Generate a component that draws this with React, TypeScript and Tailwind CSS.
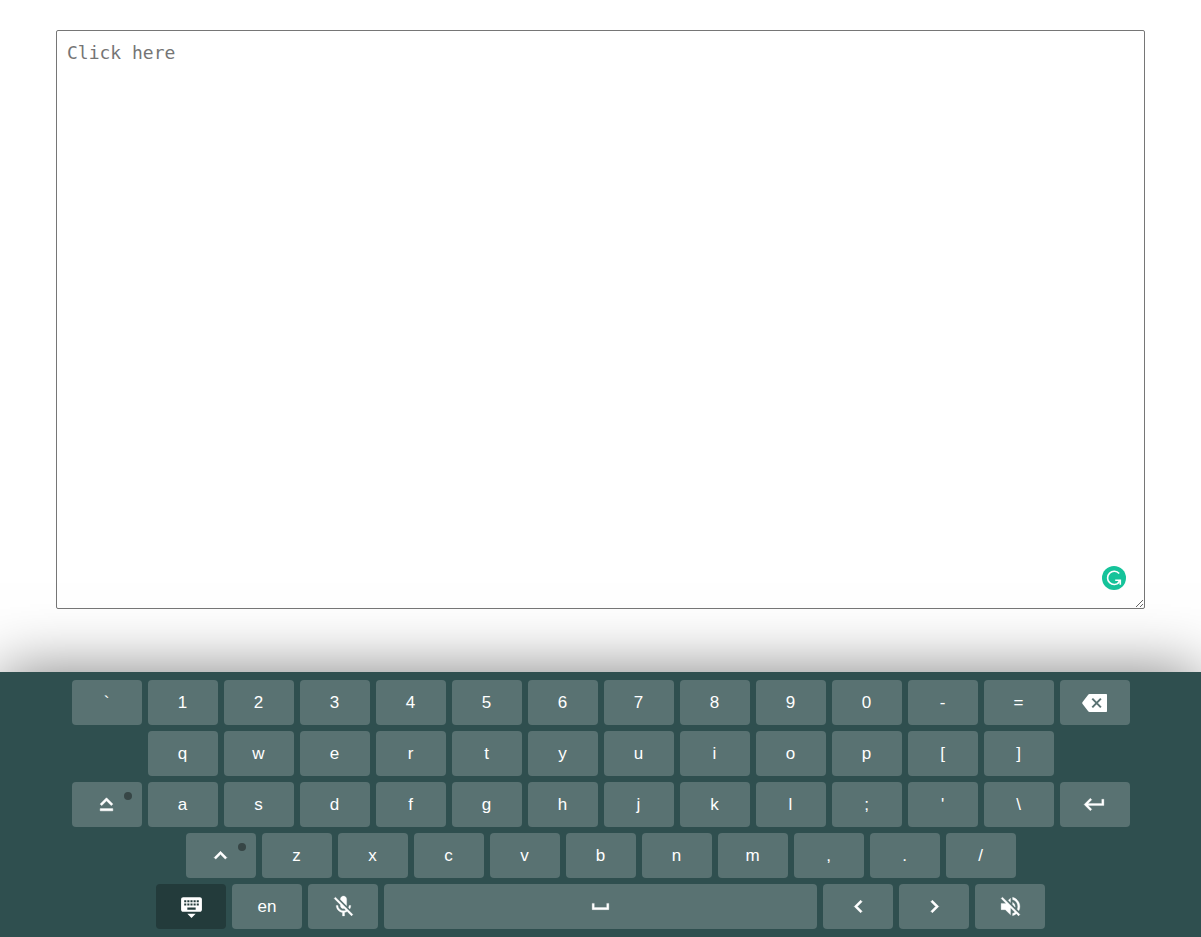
import type { ReactNode } from "react";
import {
  MdKeyboardArrowLeft,
  MdKeyboardArrowRight,
  MdKeyboardArrowUp,
  MdKeyboardCapslock,
  MdKeyboardHide,
  MdKeyboardReturn,
  MdMicOff,
  MdSpaceBar,
  MdVolumeOff,
} from "react-icons/md";

type KeyDef = {
  id: string;
  label?: string;
  icon?: ReactNode;
  dot?: boolean;
  dark?: boolean;
  wide?: boolean;
};

const chars = (text: string): KeyDef[] => text.split("").map((c) => ({ id: c }));

// The icons' invisible bounding path must stay unstroked.
const bold = "stroke-[0.6] [&>path[fill=none]]:stroke-none";
const medium = "stroke-[0.3] [&>path[fill=none]]:stroke-none";

function BackspaceIcon() {
  return (
    <svg width="25" height="25" viewBox="0 0 25 25">
      <path
        fill="#fff"
        d="M7.6 4H24.3Q25 4 25 4.7V21.3Q25 22 24.3 22H7.6Q6.6 22 6 21.1L.4 13.8Q0 13 .4 12.2L6 4.9Q6.6 4 7.6 4Z"
      />
      <path fill="none" stroke="#597272" strokeWidth="2" d="M10.3 8.6L18.9 17.4M18.9 8.6L10.3 17.4" />
    </svg>
  );
}

const rows: KeyDef[][] = [
  [...chars("`1234567890-="), { id: "backspace", label: "Backspace", icon: <BackspaceIcon /> }],
  chars("qwertyuiop[]"),
  [
    { id: "caps", label: "Caps lock", icon: <MdKeyboardCapslock size={25} className={bold} />, dot: true },
    ...chars("asdfghjkl;'\\"),
    { id: "enter", label: "Enter", icon: <MdKeyboardReturn size={25} className={medium} /> },
  ],
  [
    { id: "shift", label: "Shift", icon: <MdKeyboardArrowUp size={25} className={bold} />, dot: true },
    ...chars("zxcvbnm,./"),
  ],
  [
    { id: "hide", label: "Hide keyboard", icon: <MdKeyboardHide size={25} />, dark: true },
    { id: "en" },
    { id: "mic", label: "Microphone off", icon: <MdMicOff size={25} className={medium} /> },
    { id: "space", label: "Space", icon: <MdSpaceBar size={25} className={medium} />, wide: true },
    { id: "left", label: "Move left", icon: <MdKeyboardArrowLeft size={25} className={bold} /> },
    { id: "right", label: "Move right", icon: <MdKeyboardArrowRight size={25} className={bold} /> },
    { id: "sound", label: "Sound off", icon: <MdVolumeOff size={25} className={medium} /> },
  ],
];

function Key({ item }: { item: KeyDef }) {
  return (
    <button
      type="button"
      aria-label={item.label}
      className={`relative flex h-[45px] items-center justify-center rounded text-[17px] leading-5 text-white ${
        item.wide ? "w-[433px]" : "w-[70px]"
      } ${item.dark ? "bg-[#233b3b]" : "bg-[#597272]"}`}
    >
      {item.icon ?? item.id}
      {item.dot && <span className="absolute top-2.5 right-2.5 size-2 rounded-full bg-[#374646]" />}
    </button>
  );
}

function GrammarBadge() {
  return (
    <button
      type="button"
      aria-label="Check grammar"
      className="absolute right-[19px] bottom-[19px] size-6 rounded-full bg-[#15c39a]"
    >
      <svg viewBox="0 0 24 24" className="size-6" fill="none" stroke="#fff" strokeWidth="1.6">
        <path d="M17.2 7.6A6.6 6.6 0 1 0 17.2 16.2" />
        <path d="M13.2 14.2H18.3V18.8" />
        <path d="M18.2 14.2L16 17" />
      </svg>
    </button>
  );
}

export default function App() {
  return (
    <div className="flex min-h-screen flex-col bg-white font-['Liberation_Sans',Arial,sans-serif]">
      <main className="flex flex-1 flex-col px-14 pt-[30px] pb-[63px]">
        <div className="relative flex flex-1">
          <textarea
            aria-label="Text"
            placeholder="Click here"
            className="w-full flex-1 resize rounded-[2px] border border-[#767676] bg-white p-2.5 font-['DejaVu_Sans_Mono',monospace] text-[18px] leading-6 placeholder:text-[#757575]"
          />
          <GrammarBadge />
        </div>
      </main>
      <section
        aria-label="Keyboard"
        className="relative flex flex-col gap-1.5 bg-[#2f4f4f] py-2 shadow-[0_0_60px_rgba(0,0,0,0.5)]"
      >
        {rows.map((row, i) => (
          <div key={i} className="flex justify-center gap-1.5">
            {row.map((item) => (
              <Key key={item.id} item={item} />
            ))}
          </div>
        ))}
      </section>
    </div>
  );
}
